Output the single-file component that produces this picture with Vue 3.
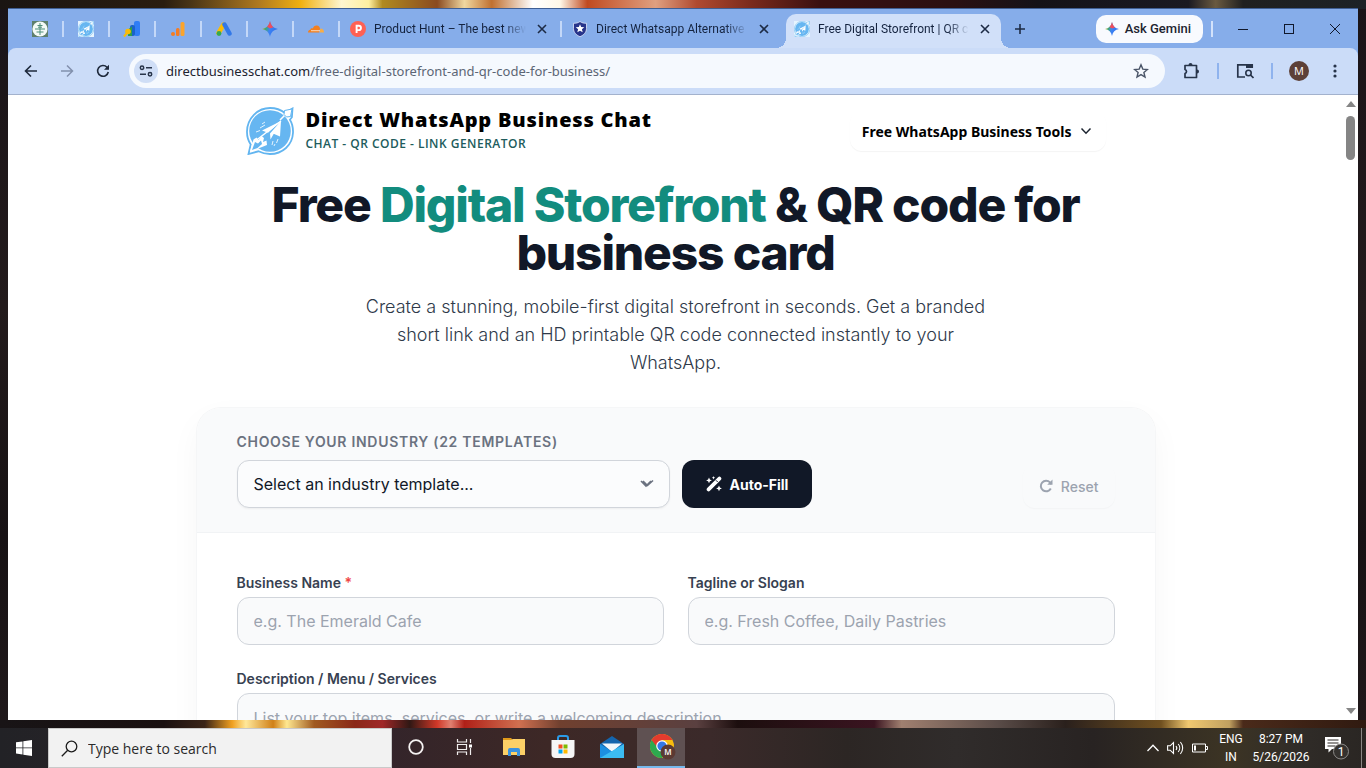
<template>
    <div class="desktop">
        <div class="window">
            <div class="tab-strip">
                <div class="pinned-tabs">
                    <button class="pinned" aria-label="Site">
                        <svg width="16" height="16" viewBox="0 0 16 16">
                            <rect width="16" height="16" fill="#5d7f6c" />
                            <circle cx="8" cy="8" r="7.6" fill="#f4faf6" />
                            <path d="M8 2v12M3 8h10M5.500 4.500h5M4.500 11h7M6 6.200h4" stroke="#4f8f7a" stroke-width="1" fill="none" />
                        </svg>
                    </button>
                    <button class="pinned" aria-label="Direct Business Chat">
                        <svg width="16" height="16" viewBox="0 0 48 48">
                            <rect width="48" height="48" fill="#e6f4fe" />
                            <use href="#rocket" />
                        </svg>
                    </button>
                    <button class="pinned" aria-label="Looker">
                        <svg width="18" height="18" viewBox="0 0 18 18">
                            <rect x="11" y="1" width="6" height="15" rx="2" fill="#2f7df6" />
                            <rect x="7" y="5" width="5" height="11" rx="2" fill="#1b62c9" />
                            <path d="M5 9.500l4-3v9.500h-4z" fill="#2f9e4d" />
                            <path d="M1 16.500l3-3.500" stroke="#fbbc04" stroke-width="2" />
                            <circle cx="5" cy="11.500" r="2.800" fill="#fbbc04" />
                        </svg>
                    </button>
                    <button class="pinned" aria-label="Analytics">
                        <svg width="16" height="16" viewBox="0 0 16 16">
                            <rect x="10.500" y="1" width="4" height="14" rx="1.500" fill="#fba42c" />
                            <rect x="6" y="7" width="3.500" height="8" rx="1.500" fill="#f57c22" />
                            <circle cx="3" cy="13" r="2" fill="#f57c22" />
                        </svg>
                    </button>
                    <button class="pinned" aria-label="Ads">
                        <svg width="16" height="16" viewBox="0 0 16 16">
                            <path d="M7.500 3.500l-5 8.500" stroke="#fbbc04" stroke-width="4.500" stroke-linecap="round" />
                            <path d="M8.500 3.500l5 9" stroke="#3278e8" stroke-width="4.500" stroke-linecap="round" />
                            <circle cx="3" cy="12.500" r="2.400" fill="#34a853" />
                        </svg>
                    </button>
                    <button class="pinned" aria-label="Gemini">
                        <svg width="16" height="16" viewBox="0 0 16 16"><use href="#gemini" /></svg>
                    </button>
                    <button class="pinned" aria-label="Cloudflare">
                        <svg width="16" height="16" viewBox="0 0 16 16">
                            <path d="M0 11.500c0-2 1.200-2.800 2.400-2.700C2.600 7.400 4 7 4.800 7.600 5.500 5.200 7 4.200 8.800 4.400c2 .2 3 1.600 3.200 3l-.8 4.100z" fill="#f38020" />
                            <path d="M11.700 11.500l.8-4c2 0 3.500 1.500 3.500 4z" fill="#fbad41" />
                            <path d="M3 9.700h9" stroke="#fff" stroke-width=".7" />
                        </svg>
                    </button>
                </div>
                <div class="tab">
                    <svg width="16" height="16" viewBox="0 0 16 16">
                        <circle cx="8" cy="8" r="8" fill="#ff6154" />
                        <path d="M6.600 12V4.800h2.200a2.100 2.100 0 010 4.300H6.600" stroke="#fff" stroke-width="1.900" fill="none" />
                    </svg>
                    <span class="tab-title">Product Hunt – The best new</span>
                    <button class="tab-close" aria-label="Close tab"><svg width="10" height="10" viewBox="0 0 10 10"><use href="#cross" /></svg></button>
                </div>
                <div class="tab">
                    <svg width="16" height="16" viewBox="0 0 16 16">
                        <path d="M8 .5c2 1.500 4 1.800 6.500 1.800v5.200c0 4-3 6.700-6.500 8.200-3.500-1.500-6.500-4.200-6.500-8.200V2.300C4 2.300 6 2 8 .5z" fill="#27348b" stroke="#dfe7fa" stroke-width=".8" />
                        <path d="M8 3.200l1.200 2.900 3.100.2-2.400 2 .8 3L8 9.700l-2.700 1.600.8-3-2.400-2 3.100-.2z" fill="#fff" />
                    </svg>
                    <span class="tab-title">Direct Whatsapp Alternative</span>
                    <button class="tab-close" aria-label="Close tab"><svg width="10" height="10" viewBox="0 0 10 10"><use href="#cross" /></svg></button>
                </div>
                <div class="tab active">
                    <svg width="16" height="16" viewBox="0 0 48 48">
                        <rect width="48" height="48" fill="#e6f4fe" />
                        <use href="#rocket" />
                    </svg>
                    <span class="tab-title">Free Digital Storefront | QR c</span>
                    <button class="tab-close" aria-label="Close tab"><svg width="10" height="10" viewBox="0 0 10 10"><use href="#cross" /></svg></button>
                </div>
                <button class="new-tab" aria-label="New tab">
                    <svg width="12" height="12" viewBox="0 0 12 12"><path d="M6 1v10M1 6h10" stroke="#1d2b45" stroke-width="1.600" /></svg>
                </button>
                <button class="ask-gemini">
                    <svg width="14" height="14" viewBox="0 0 16 16"><use href="#gemini" /></svg>
                    Ask Gemini
                </button>
                <span class="strip-divider"></span>
                <div class="window-controls">
                    <button aria-label="Minimize"><svg width="10" height="10" viewBox="0 0 10 10"><path d="M0 5.500h10" stroke="#10182c" /></svg></button>
                    <button aria-label="Maximize"><svg width="10" height="10" viewBox="0 0 10 10"><rect x=".5" y=".5" width="9" height="9" fill="none" stroke="#10182c" /></svg></button>
                    <button aria-label="Close"><svg width="10" height="10" viewBox="0 0 10 10"><path d="M0 0l10 10M10 0L0 10" stroke="#10182c" /></svg></button>
                </div>
            </div>

            <div class="toolbar">
                <button class="tool" aria-label="Back">
                    <svg width="14" height="14" viewBox="0 0 14 14"><path d="M13 7H2M7 1.500L1.500 7 7 12.500" fill="none" stroke="#1f2a3c" stroke-width="1.600" /></svg>
                </button>
                <button class="tool" aria-label="Forward">
                    <svg width="14" height="14" viewBox="0 0 14 14"><path d="M1 7h11M7 1.500L12.500 7 7 12.500" fill="none" stroke="#8291ad" stroke-width="1.500" /></svg>
                </button>
                <button class="tool" aria-label="Reload">
                    <svg width="14" height="14" viewBox="0 0 14 14">
                        <path d="M12.300 8A5.400 5.400 0 1111 3.200L12.500 4.700" fill="none" stroke="#1f2a3c" stroke-width="1.600" />
                        <path d="M13 .8v5H8z" fill="#1f2a3c" />
                    </svg>
                </button>
                <div class="omnibox">
                    <button class="site-info" aria-label="Site information">
                        <svg width="14" height="12" viewBox="0 0 14 12">
                            <circle cx="3" cy="2.700" r="1.700" fill="none" stroke="#27344a" stroke-width="1.500" />
                            <circle cx="11" cy="9.300" r="1.700" fill="none" stroke="#27344a" stroke-width="1.500" />
                            <path d="M7 2.700h6M1 9.300h6" stroke="#27344a" stroke-width="1.600" />
                        </svg>
                    </button>
                    <p class="url">directbusinesschat.com<span>/free-digital-storefront-and-qr-code-for-business/</span></p>
                    <button class="star" aria-label="Bookmark this tab">
                        <svg width="16" height="16" viewBox="0 0 16 16"><path d="M8 1.800l1.800 4.300 4.600.4-3.500 3 1.100 4.600L8 11.600l-4 2.500 1.100-4.600-3.500-3 4.600-.4z" fill="none" stroke="#4a5568" stroke-width="1.400" /></svg>
                    </button>
                </div>
                <button class="tool" aria-label="Extensions">
                    <svg width="18" height="18" viewBox="0 0 18 18"><path d="M3 3.500h11.500v12H3v-4c2-.8 2-3.200 0-4z" fill="none" stroke="#27344a" stroke-width="1.700" stroke-linejoin="round" /><path d="M6.500 3a2 2 0 014 0zM15 7.500a2 2 0 010 4z" fill="#27344a" /></svg>
                </button>
                <span class="tool-divider"></span>
                <button class="tool" aria-label="Search this page">
                    <svg width="18" height="16" viewBox="0 0 18 16">
                        <path d="M9 14H1.800V1.800h14.400V5" fill="none" stroke="#27344a" stroke-width="1.700" />
                        <path d="M10 1h7v4h-7z" fill="#27344a" />
                        <circle cx="12.500" cy="10" r="2.700" fill="none" stroke="#27344a" stroke-width="1.600" />
                        <path d="M14.500 12l3 3" stroke="#27344a" stroke-width="1.700" />
                    </svg>
                </button>
                <span class="tool-divider"></span>
                <button class="tool" aria-label="Profile"><span class="avatar">M</span></button>
                <button class="tool" aria-label="Menu">
                    <svg width="4" height="14" viewBox="0 0 4 14" fill="#27344a"><circle cx="2" cy="2" r="1.600" /><circle cx="2" cy="7" r="1.600" /><circle cx="2" cy="12" r="1.600" /></svg>
                </button>
            </div>

            <div class="viewport">
                <div class="page">
                    <header class="site-header">
                        <a class="brand" href="#">
                            <svg width="48" height="48" viewBox="0 0 48 48"><use href="#rocket" /></svg>
                            <span class="brand-text">
                                <span class="brand-name">Direct WhatsApp Business Chat</span>
                                <span class="brand-tagline">CHAT - QR CODE - LINK GENERATOR</span>
                            </span>
                        </a>
                        <button class="tools-menu">
                            Free WhatsApp Business Tools
                            <svg width="12" height="12" viewBox="0 0 12 12"><path d="M1.500 3.500L6 8.200l4.500-4.700" fill="none" stroke="#1c2430" stroke-width="1.500" /></svg>
                        </button>
                    </header>

                    <section class="hero">
                        <h1>Free <span>Digital Storefront</span> &amp; QR code for business card</h1>
                        <p>Create a stunning, mobile-first digital storefront in seconds. Get a branded short link and an HD printable QR code connected instantly to your WhatsApp.</p>
                    </section>

                    <form class="card" @submit.prevent>
                        <div class="card-head">
                            <label class="industry-label" for="industry">Choose your industry (22 templates)</label>
                            <div class="industry-row">
                                <div class="select-wrap">
                                    <select id="industry" v-model="industry">
                                        <option value="">Select an industry template...</option>
                                    </select>
                                    <svg class="select-arrow" width="14" height="10" viewBox="0 0 14 10">
                                        <path d="M1 2l5 5 5-5M3 2l4.500 4.500 5.500-5" fill="none" stroke="#6b7280" stroke-width="1.600" />
                                    </svg>
                                </div>
                                <button type="button" class="auto-fill">
                                    <svg width="16" height="16" viewBox="0 0 16 16">
                                        <path d="M2.600 13.400L13.400 2.600" stroke="#fff" stroke-width="3.800" stroke-linecap="round" />
                                        <path d="M10 4.300l1.700 1.700" stroke="#111827" stroke-width="1" />
                                        <path d="M3 1.500l.9 2 2 .9-2 .9-.9 2-.9-2-2-.9 2-.9zM13 9.500l.9 2 2 .9-2 .9-.9 2-.9-2-2-.9 2-.9zM7.500 0l.5 1.200 1.200.5-1.200.5-.5 1.200-.5-1.200-1.200-.5L7 1.200z" fill="#fff" />
                                    </svg>
                                    Auto-Fill
                                </button>
                                <button type="button" class="reset" @click="reset">
                                    <svg width="14" height="14" viewBox="0 0 14 14">
                                        <path d="M11.800 9.500A5.300 5.300 0 1111 3.400l1.500 1.600" fill="none" stroke="#9ca3af" stroke-width="2" />
                                        <path d="M13.500.5v5.300H8.200z" fill="#9ca3af" />
                                    </svg>
                                    Reset
                                </button>
                            </div>
                        </div>
                        <div class="card-body">
                            <div class="field">
                                <label for="name">Business Name <span class="required">*</span></label>
                                <input id="name" v-model="name" type="text" placeholder="e.g. The Emerald Cafe">
                            </div>
                            <div class="field">
                                <label for="tagline">Tagline or Slogan</label>
                                <input id="tagline" v-model="tagline" type="text" placeholder="e.g. Fresh Coffee, Daily Pastries">
                            </div>
                            <div class="field wide">
                                <label for="description">Description / Menu / Services</label>
                                <textarea id="description" v-model="description" rows="4" placeholder="List your top items, services, or write a welcoming description"></textarea>
                            </div>
                        </div>
                    </form>
                </div>
                <div class="scrollbar">
                    <svg width="10" height="6" viewBox="0 0 10 6"><path d="M5 0l5 6H0z" fill="#858585" /></svg>
                    <span class="thumb"></span>
                    <svg width="10" height="6" viewBox="0 0 10 6"><path d="M0 0h10L5 6z" fill="#858585" /></svg>
                </div>
            </div>
        </div>

        <div class="taskbar">
            <button class="start" aria-label="Start">
                <svg width="16" height="16" viewBox="0 0 16 16"><path d="M0 2.300l6.500-.9v6.100H0zM7.300 1.300L16 0v7.500H7.300zM0 8.300h6.500v6.200L0 13.600zM7.300 8.300H16V16l-8.700-1.300z" fill="#fff" /></svg>
            </button>
            <label class="search">
                <svg width="17" height="17" viewBox="0 0 17 17"><circle cx="10.500" cy="6.500" r="5.300" fill="none" stroke="#1c1c1c" stroke-width="1.300" /><path d="M6.700 10.300L.8 16.200" stroke="#1c1c1c" stroke-width="1.300" /></svg>
                <input type="text" placeholder="Type here to search" aria-label="Type here to search">
            </label>
            <div class="apps">
                <button class="app" aria-label="Cortana">
                    <svg width="16" height="16" viewBox="0 0 16 16"><circle cx="8" cy="8" r="6.800" fill="none" stroke="#f5f2f2" stroke-width="1.800" /></svg>
                </button>
                <button class="app" aria-label="Task View">
                    <svg width="18" height="16" viewBox="0 0 18 16"><path d="M1.500 0v3h9V0M1.500 16v-3h9v3M1.500 5.500h9v5h-9zM14.500 0v4M14.500 9v7" fill="none" stroke="#f0eded" stroke-width="1.200" /><rect x="13" y="5.500" width="3" height="3" fill="#fff" /></svg>
                </button>
                <button class="app" aria-label="File Explorer">
                    <svg width="22" height="20" viewBox="0 0 22 20">
                        <path d="M0 1h8l2 2h-10z" fill="#e09a1a" />
                        <path d="M0 5V3h8l2-1h12v16H0z" fill="#fcd067" />
                        <path d="M5 19v-6a2 2 0 012-2h8a2 2 0 012 2v6h-3v-4H8v4z" fill="#3a92df" />
                    </svg>
                </button>
                <button class="app" aria-label="Microsoft Store">
                    <svg width="24" height="24" viewBox="0 0 24 24">
                        <path d="M7 6V3a2 2 0 012-2h6a2 2 0 012 2v3" fill="none" stroke="#2b9be8" stroke-width="2" />
                        <path d="M.5 5h23v14a4 4 0 01-4 4h-15a4 4 0 01-4-4z" fill="#f6f6f6" />
                        <path d="M7.500 9.500h4v4h-4z" fill="#f25022" /><path d="M12.500 9.500h4v4h-4z" fill="#7fba00" />
                        <path d="M7.500 14.500h4v4h-4z" fill="#00a4ef" /><path d="M12.500 14.500h4v4h-4z" fill="#ffb900" />
                    </svg>
                </button>
                <button class="app" aria-label="Mail">
                    <svg width="24" height="22" viewBox="0 0 24 22">
                        <path d="M0 8L12 0l12 8v13H0z" fill="#1465ad" />
                        <path d="M2 7.500h20L12 16z" fill="#f2f7fb" />
                        <path d="M0 8l12 7.500V22H0z" fill="#1c8fe0" />
                        <path d="M24 8v14H0z" fill="#3cbcf2" />
                    </svg>
                </button>
                <button class="app current" aria-label="Google Chrome">
                    <svg width="26" height="26" viewBox="0 0 26 26">
                        <circle cx="12" cy="12" r="12" fill="#f9bd0f" />
                        <path d="M12 12L1.600 6A12 12 0 0012 24l5-8z" fill="#2da94f" />
                        <path d="M12 6h10.400A12 12 0 001.600 6L7 13z" fill="#e33b2e" />
                        <circle cx="12" cy="12" r="5.800" fill="#fff" />
                        <circle cx="12" cy="12" r="4.600" fill="#3478e5" />
                        <circle cx="18" cy="18" r="7.500" fill="#5b3a33" />
                        <text x="18" y="21" text-anchor="middle" class="badge-letter">M</text>
                    </svg>
                </button>
            </div>
            <div class="tray">
                <button aria-label="Show hidden icons"><svg width="12" height="8" viewBox="0 0 12 8"><path d="M.5 7L6 1.200 11.500 7" fill="none" stroke="#fff" stroke-width="1.300" /></svg></button>
                <button aria-label="Volume">
                    <svg width="17" height="14" viewBox="0 0 17 14"><path d="M.6 4.800h2.600L6.500 1.500v11L3.200 9.200H.6zM9 5c1 1.200 1 2.800 0 4M11.200 3c2 2.300 2 5.700 0 8M13.400 1c3 3.500 3 8.500 0 12" fill="none" stroke="#fff" stroke-width="1.100" /></svg>
                </button>
                <button aria-label="Battery">
                    <svg width="16" height="10" viewBox="0 0 16 10"><path d="M.5 1h13v8H.5zM13.500 3.500h2v3h-2" fill="none" stroke="#fff" /><path d="M2 2.500h2v5H2z" fill="#fff" /></svg>
                </button>
                <button class="language">ENG<br>IN</button>
                <button class="clock">8:27 PM<br>5/26/2026</button>
                <button class="notifications" aria-label="Notifications">
                    <svg width="26" height="26" viewBox="0 0 26 26">
                        <path d="M1 2h16v12H8l-3.500 3.500V14H1z" fill="#fff" />
                        <path d="M3.500 5h11M3.500 8h11M3.500 11h8" stroke="#2a2624" stroke-width="1.200" />
                        <circle cx="17" cy="16.500" r="7.500" fill="#35322f" stroke="#8c8a88" />
                        <text x="17" y="21" text-anchor="middle" class="badge-count">1</text>
                    </svg>
                </button>
            </div>
            <button class="show-desktop" aria-label="Show desktop"></button>
        </div>

        <svg class="defs" width="0" height="0" aria-hidden="true">
            <linearGradient id="gemini-fill" x1="0" y1=".3" x2="1" y2=".6">
                <stop offset="0" stop-color="#f6b90c" />
                <stop offset=".25" stop-color="#43a86c" />
                <stop offset=".5" stop-color="#3b82f6" />
                <stop offset="1" stop-color="#2f6fe8" />
            </linearGradient>
            <symbol id="gemini" viewBox="0 0 16 16">
                <path d="M8 0c.9 4.600 3.400 7.100 8 8-4.600.9-7.100 3.400-8 8-.9-4.600-3.400-7.100-8-8 4.600-.9 7.100-3.400 8-8z" fill="url(#gemini-fill)" />
                <path d="M8 0c.6 3 1.800 5 3.600 6.300L8 7.500 5 5.700C6.500 4.400 7.500 2.500 8 0z" fill="#ee4d5d" />
            </symbol>
            <symbol id="cross" viewBox="0 0 10 10">
                <path d="M1 1l8 8M9 1L1 9" stroke="#1d2b45" stroke-width="1.600" />
            </symbol>
            <symbol id="rocket" viewBox="0 0 48 48">
                <path d="M24 1c6 0 11 1.800 15 5l7.500-4.500-.6 8.700-2 2.500c2.500 4 3.300 8 3.100 13C46.500 38 36.500 47 24 47c-4.500 0-8-.9-11.500-2.700L2.500 47l2.200-9.500C2 33.500.9 29 1 24.500 1.200 11.500 11.500 1 24 1z" fill="#fff" stroke="#62b5f0" stroke-width="1.800" />
                <circle cx="24" cy="24" r="20.800" fill="#66b6f1" />
                <path d="M35 14L16 23.500l6 2.200zM35 14l-11 12.500.5 6zM35 14l-8 12.500 7 3z" fill="#fff" />
                <path d="M35 14L10 33.500M34 13l6-6" stroke="#fff" stroke-width="1.500" />
                <path d="M38.500 3.500l7.500-1.500-1.500 7.500-4 .5-2.500-2.500z" fill="#fff" stroke="#62b5f0" />
                <path d="M4 44.500l3.500-12 3-2 2 2.500 3-4 2.500 2-1 4 3.500-1.500.5 4.500-5 2z" fill="#fff" />
                <path d="M6 43l3-8 3 1.500 3-3 1 3.500-4.500 4z" fill="#66b6f1" />
                <path d="M14 21l5-3M10 25l4-1.500M16 17l3-2M27 34l-1 4M32 32l-1.500 4M29 37l-1 2" stroke="#e4f3fd" stroke-width="1" />
            </symbol>
        </svg>
    </div>
</template>

<script setup>
import { ref } from 'vue';

const industry = ref('');
const name = ref('');
const tagline = ref('');
const description = ref('');

function reset() {
    industry.value = '';
    name.value = '';
    tagline.value = '';
    description.value = '';
}
</script>

<style>
body {
    margin: 0;
    overflow: hidden;
}
</style>

<style scoped>
* {
    box-sizing: border-box;
}

button,
input,
select,
textarea {
    font: inherit;
    color: inherit;
    margin: 0;
    padding: 0;
    border: none;
    background: none;
}

button {
    display: flex;
    align-items: center;
    justify-content: center;
    cursor: pointer;
}

p,
h1 {
    margin: 0;
}

svg {
    flex: none;
}

.defs {
    position: absolute;
}

.desktop {
    height: 100vh;
    display: flex;
    flex-direction: column;
    gap: 8px;
    font-family: "Segoe UI", "Open Sans", sans-serif;
    background:
        linear-gradient(90deg, #1a1512 0, #2a1d10 12%, #4a3516 14%, #b07a20 19%, #f0b010 22%, #fff6d0 25%, #fff0a0 27%, #b08a20 28%, #8a4a20 32%, #f0d8a0 34%, #c07030 36%, #ffffff 39%, #fff8e8 41%, #c04a20 43%, #e0a080 48%, #b04a30 51%, #7a2a1c 55%, #3a1010 60%, #2a1012 70%, #141218 76%, #1a1a22 87%, #6a5a40 89%, #202020 91%, #1c2226 100%) top / 100% 9px no-repeat,
        linear-gradient(90deg, #181416 0, #191010 12%, #3a2418 15%, #f0a020 17%, #ffe89a 18%, #d08018 20%, #ffe890 21%, #a05a20 23%, #8a2818 26%, #a02828 28%, #301814 30%, #d03828 32%, #e08070 33%, #b02018 34%, #d07050 38%, #70402f 41%, #5a4040 51%, #1c0e0e 54%, #3a1420 64%, #a08070 66%, #5a4c48 73%, #2a201c 78%, #705020 85%, #f0c870 87%, #c0a060 90%, #4a2a1a 91%, #301a10 100%) bottom 40px left 0 / 100% 8px no-repeat,
        linear-gradient(180deg, #1a1418 0, #231b1c 40%, #171214 70%, #221a1c 100%);
}

.window {
    flex: 1;
    min-height: 0;
    margin: 8px 8px 0;
    display: flex;
    flex-direction: column;
    background: #86adea;
    border-top: 1px solid #3f5f94;
    overflow: hidden;
}

.tab-strip {
    display: flex;
    align-items: center;
    height: 39px;
    padding-left: 10px;
    color: #14233f;
    font-family: "Segoe UI", Roboto, sans-serif;
    font-size: 12px;
}

.pinned-tabs {
    display: flex;
}

.pinned {
    width: 46px;
    height: 16px;
    border-right: 2px solid #c4d8f8;
}

.tab {
    display: flex;
    align-items: center;
    gap: 8px;
    width: 222px;
    height: 16px;
    padding: 0 10px;
    border-right: 2px solid #c4d8f8;
}

.tab + .tab {
    border-color: transparent;
}

.tab.active {
    position: relative;
    width: 215px;
    height: 34px;
    align-self: flex-end;
    margin-left: 2px;
    padding: 0 8px 5px;
    border-right: none;
    background: #d1e0f9;
    border-radius: 10px 10px 0 0;
}

.tab.active::before,
.tab.active::after {
    content: "";
    position: absolute;
    bottom: 0;
    width: 10px;
    height: 10px;
}

.tab.active::before {
    left: -10px;
    background: radial-gradient(circle at 0 0, transparent 10px, #d1e0f9 10px);
}

.tab.active::after {
    right: -10px;
    background: radial-gradient(circle at 100% 0, transparent 10px, #d1e0f9 10px);
}

.tab-title {
    flex: 1;
    overflow: hidden;
    white-space: nowrap;
    line-height: 16px;
    mask-image: linear-gradient(90deg, #000 85%, transparent 100%);
}

.tab-close {
    width: 16px;
    height: 16px;
}

.new-tab {
    width: 28px;
    height: 28px;
    margin-left: 5px;
}

.ask-gemini {
    height: 28px;
    margin-left: auto;
    padding: 0 12px 0 9px;
    gap: 6px;
    border-radius: 10px;
    background: #f8fafe;
    color: #1d2430;
    font-size: 13px;
    font-weight: 500;
    white-space: nowrap;
}

.strip-divider {
    width: 2px;
    height: 16px;
    margin-left: 8px;
    background: #d3e2fb;
}

.window-controls {
    display: flex;
    margin-left: 7px;
}

.window-controls button {
    width: 46px;
    height: 39px;
}

.toolbar {
    display: flex;
    align-items: center;
    height: 47px;
    padding: 0 5px;
    background: #cbdcf8;
    border-bottom: 1px solid #a3b2cd;
    border-radius: 8px 8px 0 0;
}

.tool {
    width: 36px;
    height: 34px;
}

.tool-divider {
    width: 2px;
    height: 16px;
    margin: 0 8px;
    background: #8fb3ee;
}

.omnibox {
    flex: 1;
    display: flex;
    align-items: center;
    height: 34px;
    margin: 0 8px;
    padding: 0 16px 0 5px;
    border-radius: 17px;
    background: #f5f9fe;
}

.site-info {
    width: 24px;
    height: 24px;
    border-radius: 12px;
    background: #cfdef6;
}

.url {
    flex: 1;
    margin-left: 8px;
    color: #1c2330;
    font-family: "Segoe UI", "Noto Sans", sans-serif;
    font-size: 13px;
    line-height: 20px;
}

.url span {
    color: #5c6675;
}

.avatar {
    width: 20px;
    height: 20px;
    border-radius: 10px;
    background: #5d4037;
    color: #fff;
    font-size: 11px;
    line-height: 20px;
}

.viewport {
    flex: 1;
    min-height: 0;
    display: flex;
    overflow: hidden;
    background: #fff;
}

.page {
    flex: 1;
    padding: 12px 24px 0;
    font-family: Inter, sans-serif;
}

.scrollbar {
    display: flex;
    flex-direction: column;
    align-items: center;
    width: 15px;
    padding: 6px 0;
}

.thumb {
    width: 9px;
    height: 44px;
    margin: 9px 0 auto;
    border-radius: 5px;
    background: #858585;
}

.site-header {
    display: flex;
    align-items: center;
    justify-content: space-between;
    max-width: 860px;
    margin: 0 auto;
    font-family: "Segoe UI", "Open Sans", sans-serif;
}

.brand {
    display: flex;
    align-items: center;
    gap: 12px;
    color: #000;
    text-decoration: none;
}

.brand-text {
    display: flex;
    flex-direction: column;
}

.brand-name {
    font-size: 20px;
    font-weight: 800;
    line-height: 26px;
    letter-spacing: 0.04em;
}

.brand-tagline {
    color: #215c5c;
    font-size: 12px;
    font-weight: 600;
    line-height: 22px;
    letter-spacing: 0.04em;
}

.tools-menu {
    height: 40px;
    gap: 8px;
    padding: 0 14px 0 12px;
    border-radius: 12px;
    box-shadow: 0 1px 1px #f4f4f4;
    color: #000;
    font-family: "Segoe UI", "Noto Sans", sans-serif;
    font-size: 14px;
    font-weight: 700;
}

.hero {
    padding-top: 26px;
    text-align: center;
}

.hero h1 {
    max-width: 896px;
    margin: 0 auto;
    color: #111827;
    font-size: 48px;
    font-weight: 800;
    line-height: 48px;
    letter-spacing: -0.025em;
}

.hero h1 span {
    color: #128c7e;
}

.hero p {
    max-width: 640px;
    margin: 16px auto 0;
    color: #2f3a4a;
    font-size: 18px;
    font-weight: 300;
    line-height: 28px;
}

.card {
    max-width: 958px;
    margin: 31px auto 0;
    border-radius: 24px;
    background: #fff;
    box-shadow: 0 0 0 1px #f5f6f7, 0 12px 32px rgba(0, 0, 0, 0.04);
}

.card-head {
    padding: 24px 40px;
    border-bottom: 1px solid #f1f3f5;
    border-radius: 24px 24px 0 0;
    background: #f9fafb;
}

.industry-label {
    display: block;
    margin-bottom: 8px;
    color: #6b7280;
    font-size: 14px;
    font-weight: 600;
    line-height: 20px;
    letter-spacing: 0.05em;
    text-transform: uppercase;
}

.industry-row {
    display: flex;
    align-items: flex-end;
    gap: 12px;
}

.select-wrap {
    position: relative;
    flex: 0 1 433px;
}

select,
.field input,
.field textarea {
    display: block;
    width: 100%;
    height: 48px;
    padding: 0 16px;
    border: 1px solid #d1d5db;
    border-radius: 12px;
    background: #f9fafb;
    font-size: 16px;
}

select {
    appearance: none;
    background: #fbfcfd;
    color: #111827;
    box-shadow: 0 1px 2px rgba(0, 0, 0, 0.05);
}

.select-arrow {
    position: absolute;
    right: 16px;
    top: 19px;
    pointer-events: none;
}

.auto-fill {
    height: 48px;
    padding: 0 24px;
    gap: 8px;
    border-radius: 12px;
    background: #111827;
    color: #fff;
    font-size: 14px;
    font-weight: 700;
}

.reset {
    height: 44px;
    margin-left: auto;
    padding: 0 16px;
    gap: 8px;
    border-radius: 12px;
    box-shadow: 0 1px 1px #f3f4f5;
    color: #9ca3af;
    font-size: 14px;
    font-weight: 500;
}

.card-body {
    display: grid;
    grid-template-columns: 1fr 1fr;
    gap: 24px;
    padding: 40px;
}

.field label {
    display: block;
    margin-bottom: 4px;
    color: #374151;
    font-size: 14px;
    font-weight: 600;
    line-height: 20px;
}

.wide {
    grid-column: span 2;
}

.field textarea {
    height: 120px;
    padding: 12px 16px;
    line-height: 24px;
    resize: none;
}

.field ::placeholder {
    color: #9ca3af;
}

.required {
    color: #ef4444;
}

.taskbar {
    display: flex;
    height: 40px;
    background: linear-gradient(90deg, #222226 0, #33242a 28%, #3d2826 40%, #3b2a2a 52%, #2c2624 62%, #302c2b 70%, #282322 80%, #3c3424 90%, #302c28 95%, #2a2623 100%);
    color: #fff;
}

.start {
    width: 48px;
}

.search {
    display: flex;
    align-items: center;
    gap: 10px;
    width: 344px;
    padding: 0 12px;
    border: 1px solid #c9c9c9;
    background: #f2f2f2;
}

.search input {
    flex: 1;
    color: #2b2b2b;
    font-size: 14px;
}

.search ::placeholder {
    color: #2b2b2b;
}

.apps {
    display: flex;
    gap: 1px;
}

.app {
    width: 48px;
    border-bottom: 2px solid transparent;
}

.app.current {
    padding-left: 4px;
    border-color: #76b9ed;
    background: #5f5152;
}

.badge-letter {
    fill: #fff;
    font-size: 8px;
    font-weight: 600;
}

.badge-count {
    fill: #fff;
    font-size: 12px;
}

.tray {
    display: flex;
    align-items: center;
    gap: 8px;
    margin-left: auto;
    font-family: "Segoe UI", Roboto, sans-serif;
    font-size: 12px;
    line-height: 18px;
}

.language {
    width: 30px;
}

.clock {
    width: 54px;
}

.notifications {
    margin-left: 8px;
}

.show-desktop {
    width: 5px;
    margin-left: 11px;
    border-left: 1px solid #8a8784;
}
</style>
